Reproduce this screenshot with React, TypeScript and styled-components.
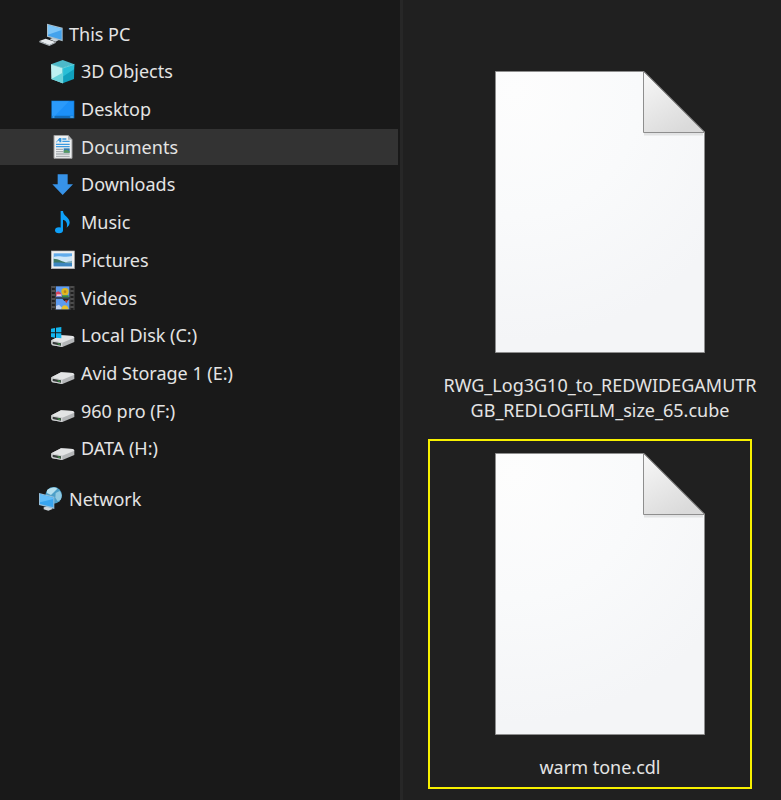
import React from "react";
import styled, { createGlobalStyle, css } from "styled-components";

const GlobalStyle = createGlobalStyle`
  * { box-sizing: border-box; }
  body {
    margin: 0;
    background: #202020;
    color: #e4e4e4;
    font-family: "Noto Sans", "Open Sans", sans-serif;
    font-size: 18px;
    line-height: 25px;
  }
  button {
    border: 0;
    padding: 0;
    background: none;
    color: inherit;
    font: inherit;
    cursor: pointer;
  }
`;

const Explorer = styled.div`
  display: flex;
  min-height: 100vh;
`;

const Sidebar = styled.nav`
  flex: 0 0 403px;
  padding: 16px 2px 16px 0;
  background: #191919;
  border-right: 3px solid #272727;
`;

const Tree = styled.ul`
  list-style: none;
  margin: 0 0 14px;
  padding: 0;
  display: flex;
  flex-direction: column;
  justify-content: space-between;
`;

const DeviceTree = styled(Tree)`
  min-height: 451px;
`;

const TreeItem = styled.button<{ $level: number; $selected?: boolean }>`
  display: flex;
  align-items: center;
  gap: 6px;
  width: 100%;
  height: 36px;
  padding-left: ${(p) => (p.$level === 0 ? 39 : 51)}px;
  text-align: left;
  white-space: nowrap;
  ${(p) =>
    p.$selected &&
    css`
      background: #333333;
    `}
`;

const Icon = styled.svg`
  flex: none;
  width: 24px;
  height: 24px;
`;

const Files = styled.main`
  flex: 1;
  display: flex;
  flex-direction: column;
  align-items: center;
  gap: 30px;
  padding: 71px 0 20px 16px;
`;

const Tile = styled.button<{ $marked?: boolean }>`
  position: relative;
  display: flex;
  flex-direction: column;
  align-items: center;
  gap: 20px;
  width: 324px;
  ${(p) =>
    p.$marked &&
    css`
      &::after {
        content: "";
        position: absolute;
        inset: -14px 10px -9px -10px;
        border: 2px solid #f7f000;
      }
    `}
`;

const Page = styled.svg`
  width: 210px;
  height: 282px;
`;

const FileName = styled.span`
  text-align: center;
  white-space: nowrap;
`;

function Computer() {
  return (
    <Icon viewBox="0 0 72 72" aria-hidden="true">
      <path d="M1 57 20 50 50 60 31 70Z" fill="#e6eaed" />
      <path d="M1 57 31 68 50 59V63L31 72 1 61Z" fill="#a8b0b6" />
      <path d="M34 50 48 46 64 52 50 59 34 53Z" fill="#c9d2d8" />
      <path d="M24 5 71 17V58L24 44Z" fill="#a9bfcd" />
      <path d="M27 9 68 20V53L27 41Z" fill="#43a2ec" />
      <path d="M27 9 68 20V24L27 38Z" fill="#7cc5f8" />
    </Icon>
  );
}

function Cube() {
  return (
    <Icon viewBox="0 0 72 72" aria-hidden="true">
      <path d="M0 13 35 0 70 13 35 24Z" fill="#4cb9c9" />
      <path d="M0 13 35 24V70L1 57Z" fill="#bdf0f1" />
      <path d="M1 57 35 38V70Z" fill="#68d2da" />
      <path d="M35 24 70 13 69 57 35 70Z" fill="#10a0bd" />
      <path d="M35 24 70 13 69 28 35 50Z" fill="#28bed6" />
      <path d="M0 13 35 24 70 13M35 24V70" fill="none" stroke="#86e4e9" strokeWidth="2" />
    </Icon>
  );
}

function Desktop() {
  return (
    <Icon viewBox="0 0 72 72" aria-hidden="true">
      <rect x="1" y="11" width="69" height="53" fill="#0c77d0" />
      <rect x="3" y="13" width="65" height="43" fill="#1c90f8" />
      <path d="M3 13H54L12 56H3Z" fill="#2b9afa" />
      <path d="M5 60H10M58 60H67" stroke="#a9dcff" strokeWidth="2" />
      <path d="M12 60H56" stroke="#1a5f9c" strokeWidth="3" />
    </Icon>
  );
}

function Document() {
  return (
    <Icon viewBox="0 0 72 72" aria-hidden="true">
      <path d="M9 1H51L63 14V70H9Z" fill="#eef0f1" stroke="#9b9b9b" strokeWidth="3" />
      <path d="M51 1V14H63Z" fill="#b2b6b9" />
      <path d="M15 22 25 9H31V22H25V17H20L18 22Z" fill="#2f94dc" />
      <path d="M34 12H46M34 19H56M15 28H56M15 35H56" stroke="#3b9ae0" strokeWidth="4" />
      <path d="M15 43H36M15 50H36M15 57H56M15 64H56" stroke="#a9aeb2" strokeWidth="4" />
      <rect x="38" y="40" width="18" height="13" fill="#2f7bb0" />
      <path d="M38 53V47L46 44 56 49V53Z" fill="#5a9a5e" />
    </Icon>
  );
}

function Download() {
  return (
    <Icon viewBox="0 0 72 72" aria-hidden="true">
      <path d="M20 4H50V34H66L35 66 4 34H20Z" fill="#3793e8" />
    </Icon>
  );
}

function Music() {
  return (
    <Icon viewBox="0 0 72 72" aria-hidden="true">
      <ellipse cx="24" cy="58" rx="12" ry="9" fill="#0ea0f8" />
      <path
        d="M29 0H36C37 15 55 18 56 34 56 42 52 46 47 50 50 38 47 29 36 26V58H29Z"
        fill="#0ea0f8"
      />
    </Icon>
  );
}

function Picture() {
  return (
    <Icon viewBox="0 0 72 72" aria-hidden="true">
      <rect x="1" y="9" width="69" height="53" fill="#f0f0f0" stroke="#b9b9b9" strokeWidth="2" />
      <rect x="8" y="16" width="55" height="39" fill="#62acec" />
      <path d="M8 27C22 20 38 30 63 24V45H8Z" fill="#cfe7f8" />
      <path d="M8 32C22 32 34 41 50 45H8Z" fill="#3f7a63" />
      <path d="M38 46C48 40 56 40 63 38V48H38Z" fill="#79a9b8" />
      <path d="M8 44C26 42 46 47 63 45V55H8Z" fill="#3d86c0" />
    </Icon>
  );
}

function Video() {
  return (
    <Icon viewBox="0 0 72 72" aria-hidden="true">
      <rect x="0" y="0" width="70" height="72" fill="#202020" />
      <path d="M1 0V72M69 0V72M13 0V72M57 0V72" stroke="#5c5c5c" strokeWidth="2" />
      <path d="M7 1V72M63 1V72" stroke="#5c5c5c" strokeWidth="10" strokeDasharray="4 8" />
      <rect x="15" y="1" width="40" height="33" fill="#5d9bf0" />
      <rect x="15" y="38" width="40" height="32" fill="#5d9bf0" />
      <circle cx="42" cy="17" r="11" fill="#e0b81f" />
      <circle cx="42" cy="17" r="4" fill="#b8861a" />
      <path d="M15 19 22 16 30 21 32 31H15Z" fill="#d84562" />
      <path d="M17 25H31V30H17Z" fill="#f0ccd6" />
      <path d="M33 28H53V34H33Z" fill="#3e8b38" />
      <path d="M34 38H55L50 45H40Z" fill="#26231f" />
      <path d="M41 43H51L46 52Z" fill="#c33b2c" />
      <path d="M31 70C32 54 51 54 53 70Z" fill="#e8c02c" />
      <path d="M15 60 24 56 31 64V70H15Z" fill="#c3d2ee" />
    </Icon>
  );
}

function DriveShape() {
  return (
    <>
      <path d="M1 49 30 34 66 36 70 40V54L34 69 4 64 1 60Z" fill="#b4b6b8" />
      <path d="M1 49 30 34 66 36 70 41 34 56Z" fill="#e3e4e5" />
      <path d="M1 49 34 56V69L4 64 1 60Z" fill="#d3d5d6" />
      <path d="M5 53 30 58V65L5 60Z" fill="#373b3a" />
      <path d="M20 58 28 60V63L20 61Z" fill="#3fae4a" />
    </>
  );
}

function Drive() {
  return (
    <Icon viewBox="0 0 72 72" aria-hidden="true">
      <DriveShape />
    </Icon>
  );
}

function SystemDrive() {
  return (
    <Icon viewBox="0 0 72 72" aria-hidden="true">
      <DriveShape />
      <path d="M0 14 12 12V25H0ZM15 11 31 9V25H15ZM0 28H12V41L0 39ZM15 28H31V43L15 41Z" fill="#12b6ee" />
    </Icon>
  );
}

function Network() {
  return (
    <Icon viewBox="0 0 72 72" aria-hidden="true">
      <circle cx="44" cy="25" r="25" fill="#4d9fc8" />
      <path d="M24 10C34 0 50 0 55 5L46 14 36 24 24 18Z" fill="#b5dfee" />
      <path d="M50 18 62 12C69 20 69 30 65 38L56 43 49 32Z" fill="#91cae2" />
      <path d="M14 61 33 58 41 66 28 71 14 67Z" fill="#ccd6dc" />
      <path d="M0 18 46 29V66L0 54Z" fill="#93bedb" />
      <path d="M3 22 43 32V61L3 51Z" fill="#38a5f0" />
      <path d="M3 22 43 32V36L3 46Z" fill="#62bdf8" />
    </Icon>
  );
}

function BlankPage({ id }: { id: string }) {
  return (
    <Page viewBox="0 0 210 282" aria-hidden="true">
      <defs>
        <radialGradient id={`${id}-paper`} gradientUnits="userSpaceOnUse" cx="20" cy="20" r="250">
          <stop offset="0" stopColor="#fdfdfd" />
          <stop offset="0.5" stopColor="#f9fafb" />
          <stop offset="1" stopColor="#f4f5f7" />
        </radialGradient>
        <linearGradient id={`${id}-fold`} x1="0" y1="0" x2="0.6" y2="1">
          <stop offset="0" stopColor="#f8f8f8" />
          <stop offset="1" stopColor="#dadada" />
        </linearGradient>
      </defs>
      <path d="M0.5 0.5H149L209.5 61V281.5H0.5Z" fill={`url(#${id}-paper)`} stroke="#8e8e8e" />
      <path d="M149 63H208" stroke="#e2e3e4" strokeWidth="3" />
      <path d="M148.5 1V61.5H209.5L149 1Z" fill={`url(#${id}-fold)`} stroke="#8e8e8e" />
    </Page>
  );
}

const places = [
  { label: "This PC", level: 0, Glyph: Computer },
  { label: "3D Objects", level: 1, Glyph: Cube },
  { label: "Desktop", level: 1, Glyph: Desktop },
  { label: "Documents", level: 1, Glyph: Document },
  { label: "Downloads", level: 1, Glyph: Download },
  { label: "Music", level: 1, Glyph: Music },
  { label: "Pictures", level: 1, Glyph: Picture },
  { label: "Videos", level: 1, Glyph: Video },
  { label: "Local Disk (C:)", level: 1, Glyph: SystemDrive },
  { label: "Avid Storage 1 (E:)", level: 1, Glyph: Drive },
  { label: "960 pro (F:)", level: 1, Glyph: Drive },
  { label: "DATA (H:)", level: 1, Glyph: Drive },
];

export default function App() {
  return (
    <>
      <GlobalStyle />
      <Explorer>
        <Sidebar aria-label="Folders">
          <DeviceTree>
            {places.map(({ label, level, Glyph }) => (
              <li key={label}>
                <TreeItem
                  type="button"
                  $level={level}
                  $selected={label === "Documents"}
                  aria-current={label === "Documents" ? "true" : undefined}
                >
                  <Glyph />
                  {label}
                </TreeItem>
              </li>
            ))}
          </DeviceTree>
          <Tree>
            <li>
              <TreeItem type="button" $level={0}>
                <Network />
                Network
              </TreeItem>
            </li>
          </Tree>
        </Sidebar>
        <Files>
          <Tile type="button">
            <BlankPage id="cube" />
            <FileName>
              RWG_Log3G10_to_REDWIDEGAMUTR
              <br />
              GB_REDLOGFILM_size_65.cube
            </FileName>
          </Tile>
          <Tile type="button" $marked>
            <BlankPage id="cdl" />
            <FileName>warm tone.cdl</FileName>
          </Tile>
        </Files>
      </Explorer>
    </>
  );
}
